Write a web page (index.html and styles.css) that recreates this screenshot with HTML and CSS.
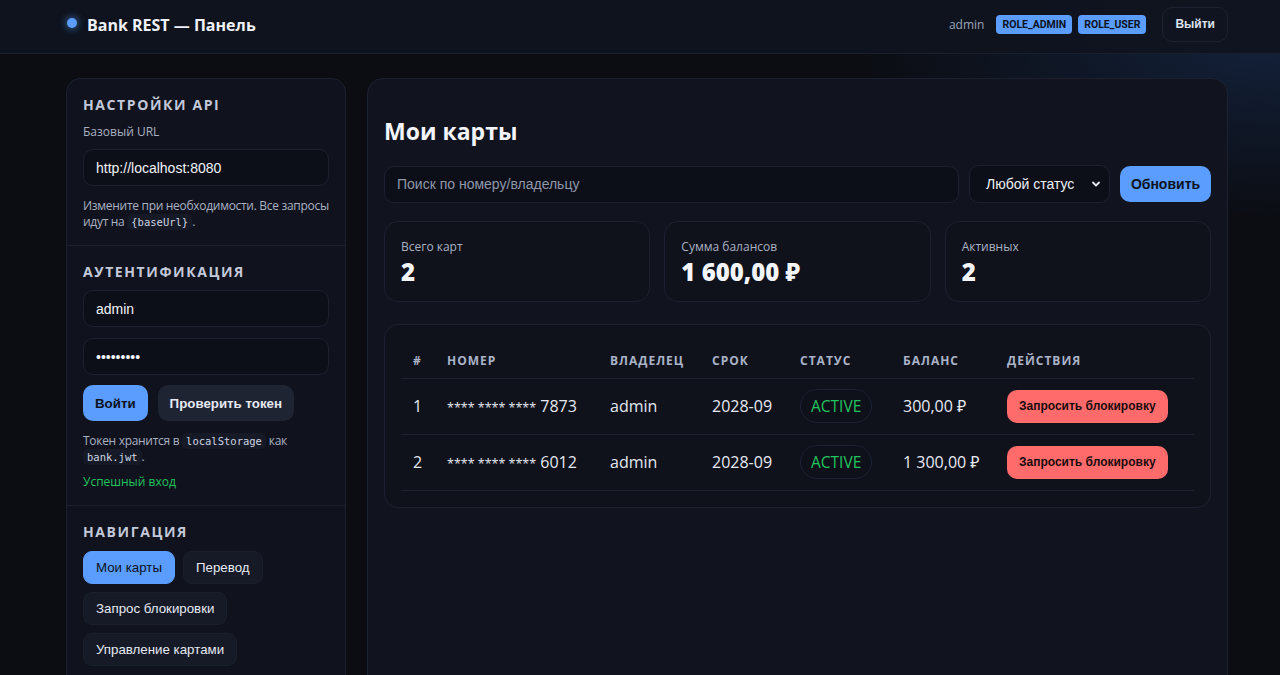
FILE: index.html
```html
<!DOCTYPE html>
<html lang="ru">
<head>
<meta charset="utf-8">
<title>Bank REST — Панель</title>
<link rel="stylesheet" href="styles.css">
</head>
<body>
<header class="topbar">
  <div class="topbar-inner">
    <div class="brand"><span class="brand-dot"></span><span class="brand-title">Bank REST — Панель</span></div>
    <div class="user">
      <span class="user-name">admin</span>
      <span class="role">ROLE_ADMIN</span>
      <span class="role">ROLE_USER</span>
      <button class="btn-ghost">Выйти</button>
    </div>
  </div>
</header>
<div class="layout">
  <aside class="sidebar">
    <section class="side-section">
      <h3 class="side-title">Настройки API</h3>
      <div class="label">Базовый URL</div>
      <input class="field" type="text" value="http://localhost:8080">
      <p class="hint">Измените при необходимости. Все запросы идут на <code>{baseUrl}</code>.</p>
    </section>
    <section class="side-section">
      <h3 class="side-title">Аутентификация</h3>
      <input class="field" type="text" value="admin">
      <input class="field" type="password" value="admin1234">
      <div class="btn-row">
        <button class="btn btn-primary">Войти</button>
        <button class="btn btn-secondary">Проверить токен</button>
      </div>
      <p class="hint">Токен хранится в <code>localStorage</code> как <code>bank.jwt</code>.</p>
      <p class="ok">Успешный вход</p>
    </section>
    <section class="side-section">
      <h3 class="side-title">Навигация</h3>
      <nav class="nav">
        <button class="nav-btn active">Мои карты</button>
        <button class="nav-btn">Перевод</button>
        <button class="nav-btn">Запрос блокировки</button>
        <button class="nav-btn">Управление картами</button>
      </nav>
    </section>
  </aside>
  <main class="main">
    <h1 class="page-title">Мои карты</h1>
    <div class="toolbar">
      <input class="field search" type="text" placeholder="Поиск по номеру/владельцу">
      <div class="select-wrap">
        <span class="select-text">Любой статус</span>
        <svg class="chev" width="10" height="10" viewBox="0 0 10 10"><path d="M2 3.5 L5 6.5 L8 3.5" fill="none" stroke="#e6e9f2" stroke-width="1.8" stroke-linecap="round" stroke-linejoin="round"/></svg>
      </div>
      <button class="btn btn-primary btn-refresh">Обновить</button>
    </div>
    <div class="stats">
      <div class="stat"><div class="stat-label">Всего карт</div><div class="stat-value">2</div></div>
      <div class="stat"><div class="stat-label">Сумма балансов</div><div class="stat-value">1 600,00 ₽</div></div>
      <div class="stat"><div class="stat-label">Активных</div><div class="stat-value">2</div></div>
    </div>
    <div class="table-card">
      <table class="cards">
        <thead>
          <tr><th class="c-idx">#</th><th class="c-num">Номер</th><th class="c-own">Владелец</th><th class="c-exp">Срок</th><th class="c-st">Статус</th><th class="c-bal">Баланс</th><th>Действия</th></tr>
        </thead>
        <tbody>
          <tr><td>1</td><td><span class="stars">**** **** ****</span> 7873</td><td>admin</td><td>2028-09</td><td><span class="pill">ACTIVE</span></td><td>300,00 ₽</td><td><button class="btn-danger">Запросить блокировку</button></td></tr>
          <tr><td>2</td><td><span class="stars">**** **** ****</span> 6012</td><td>admin</td><td>2028-09</td><td><span class="pill">ACTIVE</span></td><td>1 300,00 ₽</td><td><button class="btn-danger">Запросить блокировку</button></td></tr>
        </tbody>
      </table>
    </div>
  </main>
</div>
</body>
</html>
```
FILE: styles.css
```css
* { box-sizing: border-box; }
html, body { margin: 0; height: 100%; }
body {
  font-family: "Open Sans", "Noto Sans", sans-serif;
  color: #e6e9f2;
  background:
    radial-gradient(ellipse 600px 260px at 100% 5%, rgba(30, 60, 110, 0.45), rgba(30,60,110,0) 70%),
    #0b0d13;
  overflow: hidden;
}
.topbar {
  height: 54px;
  padding-bottom: 5px;
  background: rgba(15, 19, 30, 0.92);
  border-bottom: 1px solid #1a1f2c;
}
.topbar-inner {
  width: 1162px;
  margin-left: 66px;
  height: 100%;
  display: flex;
  align-items: center;
  justify-content: space-between;
}
.brand { display: flex; align-items: center; gap: 10px; padding-left: 1px; }
.brand-dot {
  width: 10px; height: 10px; border-radius: 50%;
  background: #5b9cff;
  box-shadow: 0 0 8px rgba(91, 156, 255, 0.8);
  margin-top: -3px;
}
.brand-title { font-weight: 700; font-size: 16px; color: #eef1f7; margin-top: 1px; }
.user { display: flex; align-items: center; gap: 6px; }
.user-name { font-size: 12px; color: #9aa3b8; margin-right: 6px; }
.role {
  background: #5b9cff; color: #0b1220;
  font-family: Roboto, "Liberation Sans", Arial, sans-serif;
  font-size: 10.5px; font-weight: 700;
  padding: 3px 6px; border-radius: 4px;
}
.btn-ghost {
  margin-left: 10px;
  height: 35px; padding: 0 12px;
  background: transparent; color: #dde2ee;
  border: 1px solid #1d2231; border-radius: 10px;
  font-family: "Liberation Sans", Arial, sans-serif; font-weight: 700; font-size: 12px;
}
.layout {
  width: 1162px;
  margin-left: 66px;
  margin-top: 24px;
  display: flex;
  gap: 21px;
  align-items: flex-start;
}
.sidebar {
  width: 280px;
  flex: none;
  background: #10131d;
  border: 1px solid #1c2130;
  border-radius: 14px;
  height: 640px;
}
.side-section { padding: 16px 16px 15px; border-bottom: 1px solid #1c2130; }
.side-section:last-child { border-bottom: none; }
.side-title {
  margin: 0 0 9px;
  font-size: 14px; font-weight: 700;
  letter-spacing: 1.6px; text-transform: uppercase;
  color: #c3c9da;
}
.label { font-size: 12px; color: #aab1c2; margin: 0 0 9px; }
.field {
  display: block; width: 100%;
  height: 37px; padding: 0 12px;
  background: #0c0f18; color: #f1f3f8;
  border: 1px solid #1c2130; border-radius: 10px;
  font-family: "Liberation Sans", Arial, sans-serif; font-size: 14px;
  outline: none;
}
.side-section .field + .field { margin-top: 11px; }
.hint { margin: 12px 0 0; font-size: 12px; line-height: 16px; color: #aab1c2; letter-spacing: -0.3px; }
code {
  font-family: "DejaVu Sans Mono", "Liberation Mono", monospace; font-size: 10.5px;
  background: #151a26; color: #cfd5e3; letter-spacing: 0;
  padding: 2px 4px; border-radius: 5px;
}
.ok { margin: 8px 0 0; font-size: 12px; color: #22c55e; }
.btn-row { display: flex; gap: 10px; margin-top: 10px; }
.btn {
  height: 36px; padding: 0 12px;
  border: none; border-radius: 10px;
  font-family: "Liberation Sans", Arial, sans-serif; font-weight: 700; font-size: 13.3px;
}
.btn-primary { background: #5b9cff; color: #0b1220; }
.btn-secondary { background: #1f2432; color: #e6e9f2; }
.nav { display: flex; flex-wrap: wrap; gap: 8px; margin-top: 10px; }
.nav-btn {
  height: 33px; padding: 0 12px;
  background: #151a26; color: #e6e9f2;
  border: 1px solid #1a1f2c; border-radius: 9px;
  font-family: "Liberation Sans", Arial, sans-serif; font-size: 13.3px;
}
.nav-btn.active { background: #5b9cff; color: #0b1220; border-color: #5b9cff; }
.main {
  flex: 1;
  height: 640px;
  background: #11141e;
  border: 1px solid #1c2130;
  border-radius: 16px;
  padding: 24px 16px 16px;
}
.page-title { margin: 12px 0 18px; font-size: 23px; font-weight: 700; color: #f3f5fa; }
.toolbar { display: flex; gap: 10px; align-items: center; }
.search { flex: 1; width: auto; }
.search::placeholder { color: #8f97aa; }
.select-wrap {
  width: 141px; height: 38px;
  display: flex; align-items: center; justify-content: space-between;
  padding: 0 8px 0 16px;
  background: #0c0f18; border: 1px solid #1c2130; border-radius: 10px;
  font-family: "Liberation Sans", Arial, sans-serif; font-size: 14px; color: #eef1f7;
}
.btn-refresh { height: 36px; width: 91px; padding: 0; font-size: 14px; }
.stats { display: grid; grid-template-columns: repeat(3, 1fr); gap: 14px; margin-top: 18px; }
.stat {
  height: 81px;
  background: #0f121b; border: 1px solid #1c2130; border-radius: 14px;
  padding: 16px 16px;
}
.stat-label { font-size: 12px; line-height: 17px; color: #aab1c2; }
.stat-value { font-size: 24px; font-weight: 800; color: #f3f5fa; margin-top: 4px; line-height: 26px; }
.table-card {
  margin-top: 22px;
  background: #0f121b; border: 1px solid #1c2130; border-radius: 14px;
  padding: 16px 16px;
}
.cards { width: 100%; border-collapse: collapse; }
.cards th {
  text-align: left; font-size: 12px; font-weight: 700;
  letter-spacing: 1px; text-transform: uppercase; color: #aab3c8;
  padding: 2px 12px 0; height: 37px; border-bottom: 1px solid #1c2130;
}
.cards td {
  font-size: 16px; color: #e6e9f2;
  padding: 0 12px; height: 56px;
  border-bottom: 1px solid #1c2130;
}
.c-idx { width: 34px; }
.c-num { width: 163px; }
.c-own { width: 102px; }
.c-exp { width: 88px; }
.c-st { width: 103px; }
.c-bal { width: 104px; }
.stars { font-size: 12.5px; letter-spacing: 0; }
.pill {
  display: inline-flex; align-items: center; height: 34px; padding: 0 10px;
  border: 1px solid #1c2232; background: #0e111a; border-radius: 17px;
  color: #22c55e; font-size: 15.5px;
}
.btn-danger {
  height: 33px; padding: 0 12px;
  background: #ff6b6b; color: #1a0b0e; border: none; border-radius: 10px;
  font-family: "Liberation Sans", Arial, sans-serif; font-weight: 700; font-size: 12px;
}
```
